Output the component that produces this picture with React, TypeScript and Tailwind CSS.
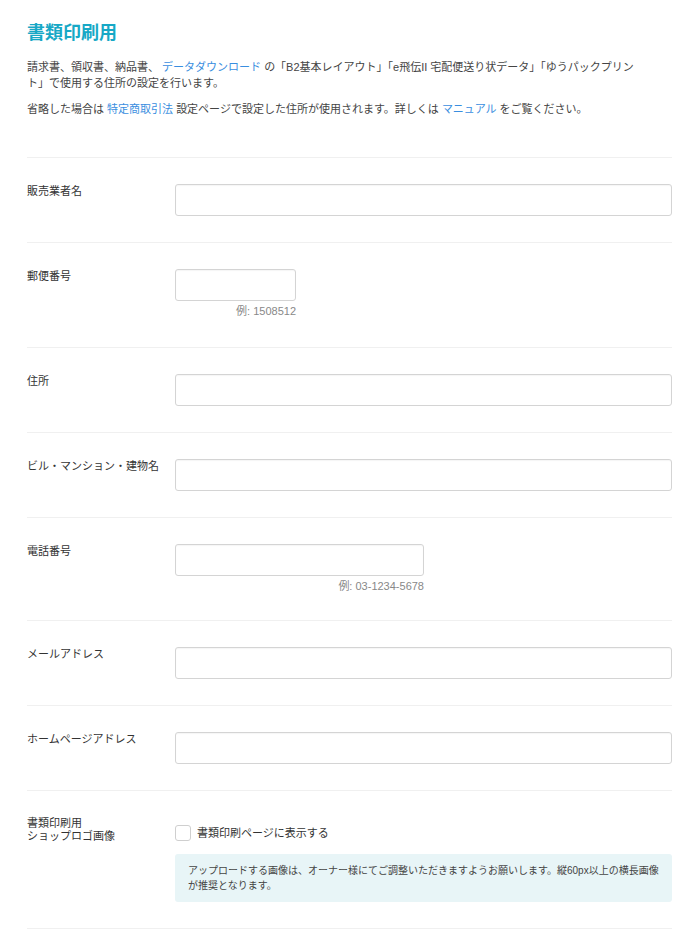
export default function App() {
  const rows = [
    { label: "販売業者名", width: "w-full", pb: "pb-[26px]" },
    { label: "郵便番号", width: "w-[121px]", hint: "例: 1508512", pb: "pb-[29px]" },
    { label: "住所", width: "w-full", pb: "pb-[26px]" },
    { label: "ビル・マンション・建物名", width: "w-full", pb: "pb-[26px]" },
    { label: "電話番号", width: "w-[249px]", hint: "例: 03-1234-5678", pb: "pb-[27px]" },
    { label: "メールアドレス", width: "w-full", pb: "pb-[26px]" },
    { label: "ホームページアドレス", width: "w-full", pb: "pb-[26px]" },
  ];

  return (
    <div
      className="w-[700px] min-h-[931px] bg-white px-[27px] pr-[28px] pt-[21px] text-[#333]"
      style={{ fontFamily: '"Liberation Sans", "Noto Sans CJK JP", sans-serif' }}
    >
      <h1 className="text-[18px] leading-[24px] font-bold text-[#17a8c6]">
        書類印刷用
      </h1>

      <p className="mt-[14px] text-[11px] leading-[16px] text-[#444]">
        請求書、領収書、納品書、
        <span className="text-[#3a8ee0]"> データダウンロード </span>
        の「B2基本レイアウト」「e飛伝II 宅配便送り状データ」「ゆうパックプリン
        <br />
        ト」で使用する住所の設定を行います。
      </p>
      <p className="mt-[10px] text-[11px] leading-[16px] text-[#444]">
        省略した場合は <span className="text-[#3a8ee0]">特定商取引法</span>{" "}
        設定ページで設定した住所が使用されます。詳しくは{" "}
        <span className="text-[#3a8ee0]">マニュアル</span> をご覧ください。
      </p>

      <div className="mt-[40px] border-t border-[#f0f0f0]">
        {rows.map((r) => (
          <div
            key={r.label}
            className={`flex border-b border-[#f0f0f0] pt-[26px] ${r.pb}`}
          >
            <div className="w-[148px] shrink-0 -mt-[1px] text-[11px] leading-[16px] text-[#333]">
              {r.label}
            </div>
            <div className="flex-1">
              <div className={r.width}>
                <input
                  type="text"
                  className="block h-[32px] w-full rounded-[3px] border border-[#d4d4d4] bg-white shadow-[inset_0_1px_1px_rgba(0,0,0,0.04)]"
                />
                {r.hint && (
                  <div className="mt-[3px] text-right text-[11px] leading-[14px] text-[#888]">
                    {r.hint}
                  </div>
                )}
              </div>
            </div>
          </div>
        ))}

        <div className="flex border-b border-[#f0f0f0] pt-[26px] pb-[26px]">
          <div className="w-[148px] shrink-0 text-[11px] leading-[13px] text-[#333]">
            書類印刷用
            <br />
            ショップロゴ画像
          </div>
          <div className="flex-1">
            <label className="flex h-[32px] items-center gap-[6px]">
              <span className="block h-[16px] w-[16px] rounded-[3px] border border-[#cfcfcf] bg-white" />
              <span className="text-[11px] text-[#333]">書類印刷ページに表示する</span>
            </label>
            <div className="mt-[5px] rounded-[3px] bg-[#e8f5f7] px-[13px] py-[9px] text-[10px] leading-[15px] text-[#444]">
              アップロードする画像は、オーナー様にてご調整いただきますようお願いします。縦60px以上の横長画像
              <br />
              が推奨となります。
            </div>
          </div>
        </div>
      </div>
    </div>
  );
}
